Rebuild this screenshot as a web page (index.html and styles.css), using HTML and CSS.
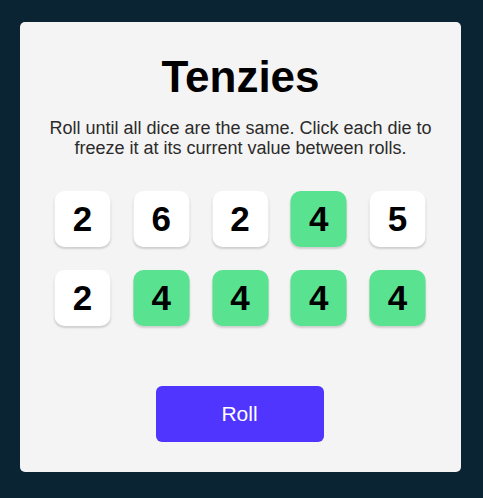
FILE: index.html
```html
<!DOCTYPE html>
<html lang="en">
<head>
<meta charset="utf-8">
<title>Tenzies</title>
<link rel="stylesheet" href="styles.css">
</head>
<body>
<main class="card">
  <h1 class="title">Tenzies</h1>
  <p class="instructions">Roll until all dice are the same. Click each die to freeze it at its current value between rolls.</p>
  <div class="dice">
    <button class="die">2</button>
    <button class="die">6</button>
    <button class="die">2</button>
    <button class="die held">4</button>
    <button class="die">5</button>
    <button class="die">2</button>
    <button class="die held">4</button>
    <button class="die held">4</button>
    <button class="die held">4</button>
    <button class="die held">4</button>
  </div>
  <button class="roll">Roll</button>
</main>
</body>
</html>
```

FILE: styles.css
```css
* { box-sizing: border-box; }

html, body {
  margin: 0;
  padding: 0;
  background: #0B2434;
}

body {
  padding: 22px 22px 0 20px;
  font-family: "Liberation Sans", Arial, sans-serif;
}

.card {
  width: 441px;
  height: 450px;
  background: #F4F4F4;
  border-radius: 5px;
  display: flex;
  flex-direction: column;
  align-items: center;
  padding-top: 30px;
}

.title {
  margin: 0;
  font-size: 44px;
  line-height: 50px;
  font-weight: 700;
  color: #000;
}

.instructions {
  margin: 16px 0 0;
  width: 400px;
  text-align: center;
  font-size: 18px;
  line-height: 20px;
  color: #2B2B2B;
}

.dice {
  margin-top: 33px;
  display: grid;
  grid-template-columns: repeat(5, 56px);
  grid-auto-rows: 56px;
  column-gap: 22.75px;
  row-gap: 23px;
  transform: translateX(-0.5px);
}

.die {
  border: none;
  border-radius: 10px;
  background: #FFFFFF;
  box-shadow: 0 2px 2px rgba(0, 0, 0, 0.15);
  font-family: "Liberation Sans", Arial, sans-serif;
  font-size: 35px;
  font-weight: 700;
  color: #000;
  padding: 0;
  display: flex;
  align-items: center;
  justify-content: center;
}

.die.held {
  background: #59E391;
}

.roll {
  margin-top: 60px;
  width: 168px;
  height: 56px;
  border: none;
  border-radius: 6px;
  background: #5035FF;
  color: #FFFFFF;
  font-family: "Liberation Sans", Arial, sans-serif;
  font-size: 21px;
  padding: 0;
  transform: translateX(-1px);
}
```
